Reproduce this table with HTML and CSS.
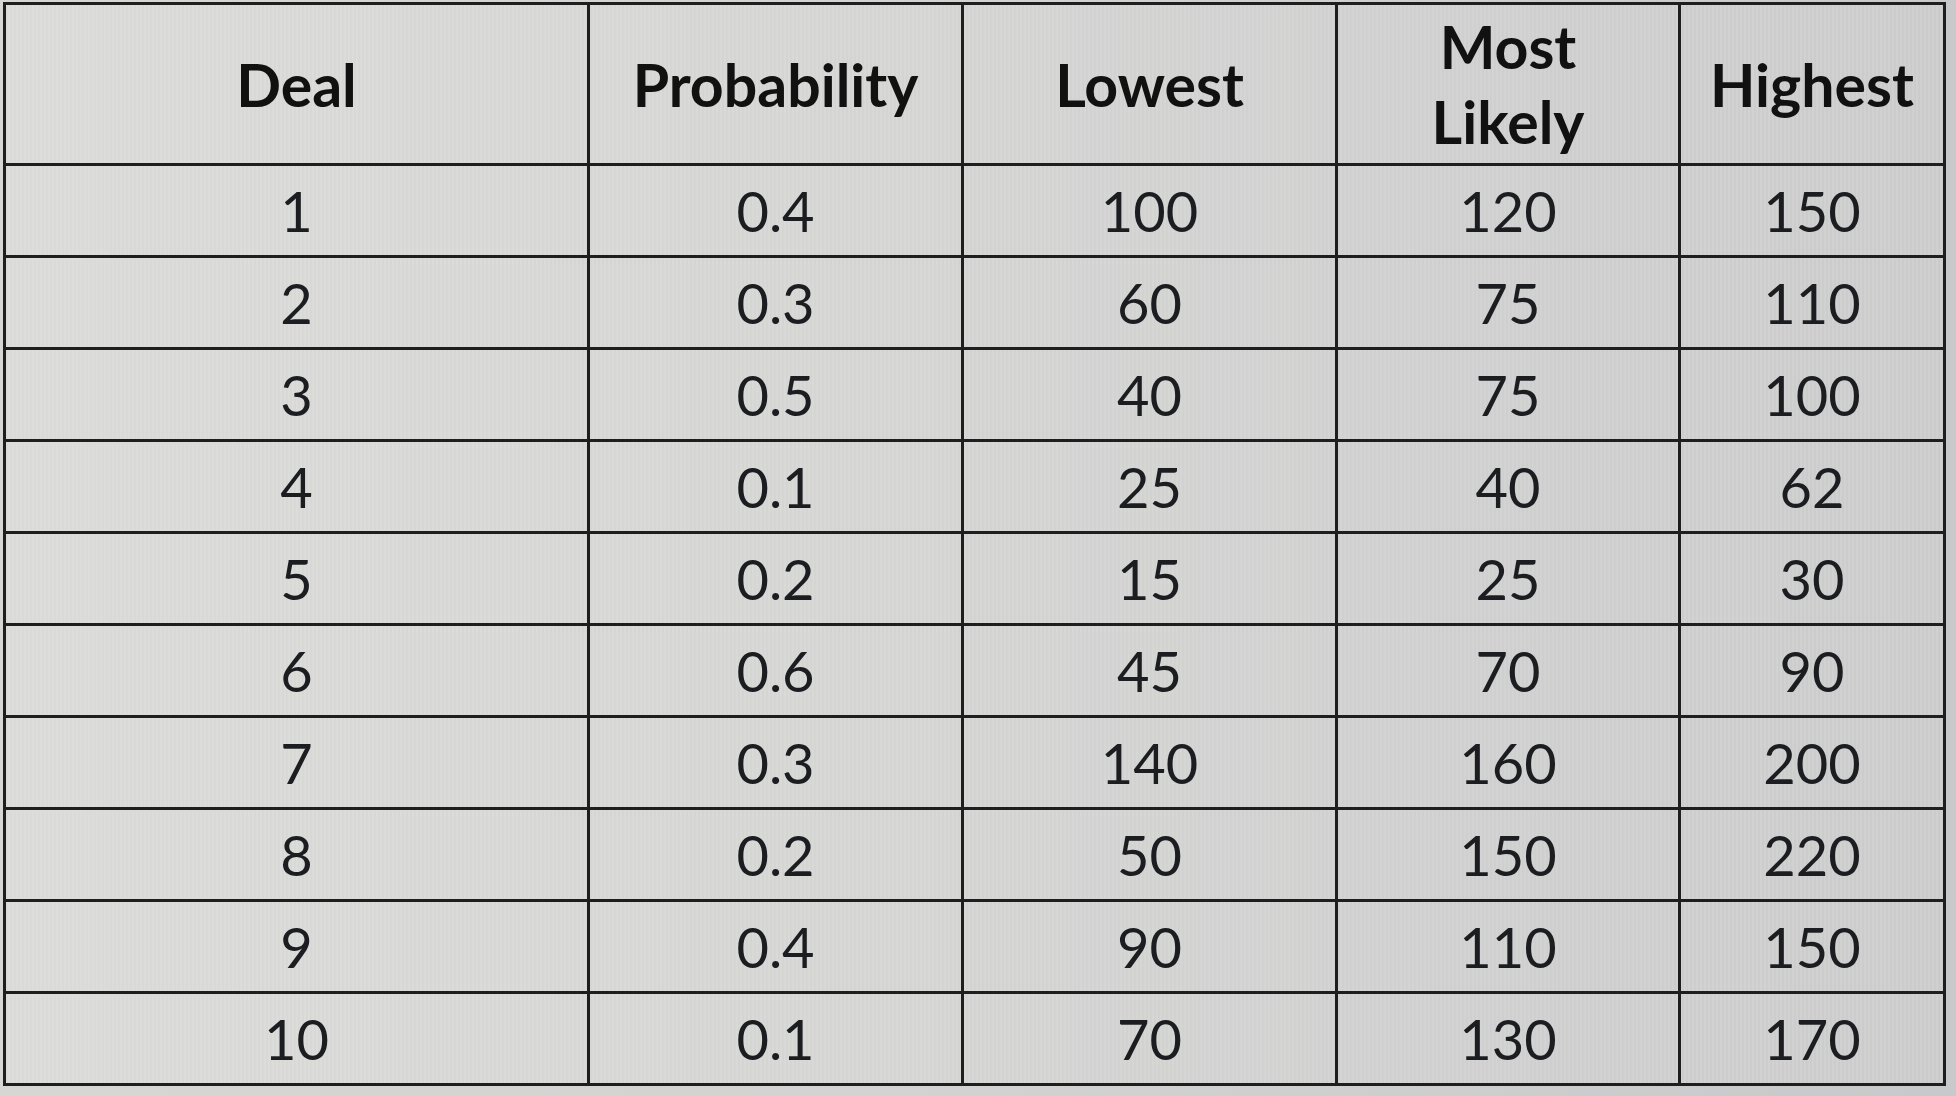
FILE: index.html
```html
<!DOCTYPE html>
<html>
<head>
<meta charset="utf-8">
<link rel="stylesheet" href="styles.css">
</head>
<body>
<div class="page">
<table class="deals">
<colgroup>
<col class="c1"><col class="c2"><col class="c3"><col class="c4"><col class="c5">
</colgroup>
<thead>
<tr><th>Deal</th><th>Probability</th><th>Lowest</th><th>Most<br>Likely</th><th>Highest</th></tr>
</thead>
<tbody>
<tr><td>1</td><td>0.4</td><td>100</td><td>120</td><td>150</td></tr>
<tr><td>2</td><td>0.3</td><td>60</td><td>75</td><td>110</td></tr>
<tr><td>3</td><td>0.5</td><td>40</td><td>75</td><td>100</td></tr>
<tr><td>4</td><td>0.1</td><td>25</td><td>40</td><td>62</td></tr>
<tr><td>5</td><td>0.2</td><td>15</td><td>25</td><td>30</td></tr>
<tr><td>6</td><td>0.6</td><td>45</td><td>70</td><td>90</td></tr>
<tr><td>7</td><td>0.3</td><td>140</td><td>160</td><td>200</td></tr>
<tr><td>8</td><td>0.2</td><td>50</td><td>150</td><td>220</td></tr>
<tr><td>9</td><td>0.4</td><td>90</td><td>110</td><td>150</td></tr>
<tr><td>10</td><td>0.1</td><td>70</td><td>130</td><td>170</td></tr>
</tbody>
</table>
</div>
</body>
</html>
```

FILE: styles.css
```css
html, body {
  margin: 0;
  padding: 0;
}
body {
  width: 1956px;
  height: 1096px;
  overflow: hidden;
  background: linear-gradient(90deg, #d6d6d4 0%, #d2d2d2 50%, #c8c9ca 100%);
  font-family: Lato, "Liberation Sans", sans-serif;
  color: #161616;
}
.page {
  padding: 2px 0 0 3px;
}
.deals {
  border-collapse: collapse;
  table-layout: fixed;
  width: 1940px;
  border: 3px solid #1e1e1e;
  background:
    repeating-linear-gradient(90deg, rgba(255,255,255,0.18) 0 1px, rgba(0,0,0,0) 1px 4px),
    linear-gradient(90deg, #dadad8 0%, #d4d4d3 45%, #cbcbcc 100%);
}
.c1 { width: 584px; }
.c2 { width: 374px; }
.c3 { width: 374px; }
.c4 { width: 343px; }
.c5 { width: 265px; }
.deals th, .deals td {
  border: 3px solid #1e1e1e;
  text-align: center;
  vertical-align: middle;
  padding: 0;
}
.deals th {
  height: 158px;
  font-size: 59px;
  font-weight: 700;
  line-height: 75px;
  color: #111;
}
.deals td {
  height: 89px;
  font-size: 56px;
  font-weight: 400;
  line-height: 1;
  color: #1b1d20;
}
```
